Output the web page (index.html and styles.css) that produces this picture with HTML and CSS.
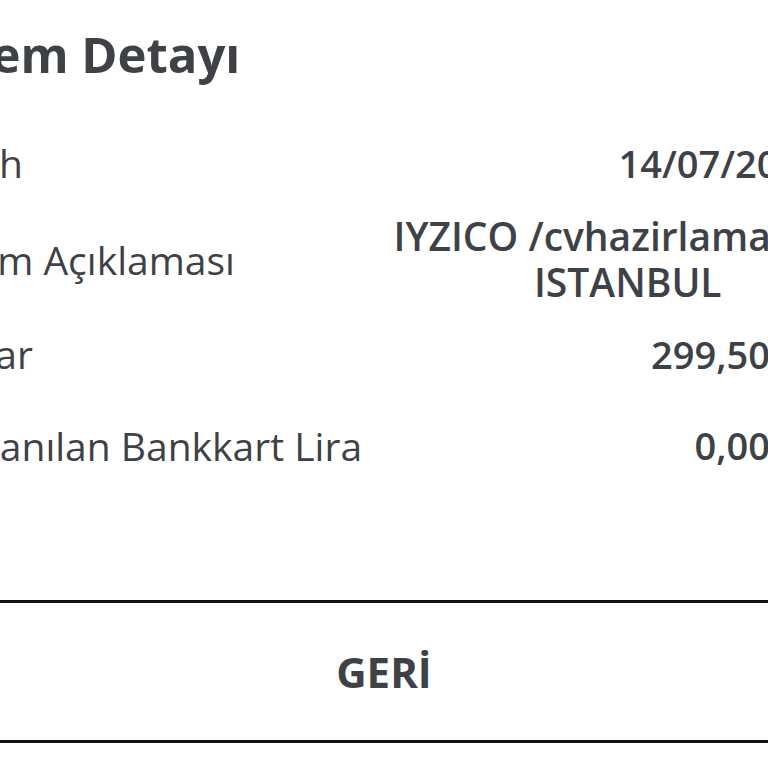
FILE: index.html
```html
<!DOCTYPE html>
<html lang="tr">
<head>
<meta charset="utf-8">
<title>İşlem Detayı</title>
<link rel="stylesheet" href="styles.css">
</head>
<body>
<div class="viewport">
  <div class="screen">
    <h1 class="title">İşlem Detayı</h1>
    <div class="rows">
      <div class="row row-1">
        <span class="label">Tarih</span>
        <span class="value">14/07/2021</span>
      </div>
      <div class="row row-2">
        <span class="label">İşlem Açıklaması</span>
        <span class="value value-multi">IYZICO /cvhazirlama.com<br>ISTANBUL</span>
      </div>
      <div class="row row-3">
        <span class="label">Tutar</span>
        <span class="value">299,50 TL</span>
      </div>
      <div class="row row-4">
        <span class="label">Kazanılan Bankkart Lira</span>
        <span class="value">0,00 TL</span>
      </div>
    </div>
    <div class="actions">
      <button class="back-btn">GERİ</button>
    </div>
  </div>
</div>
</body>
</html>
```

FILE: styles.css
```css
html, body {
  margin: 0;
  padding: 0;
  background: #ffffff;
}

.viewport {
  width: 768px;
  height: 768px;
  overflow: hidden;
  position: relative;
}

.screen {
  width: 1000px;
  margin-left: -64px;
  font-family: "Open Sans", "Noto Sans", sans-serif;
  color: #3e4246;
}

.title {
  margin: 0;
  padding: 20px 0 0 0;
  font-size: 49px;
  font-weight: 700;
  line-height: 68px;
}

.rows {
  padding: 26px 114px 0 0;
}

.row {
  display: flex;
  justify-content: space-between;
  align-items: center;
}

.row-1 { height: 97px; }
.row-2 { height: 96px; }
.row-3 { height: 93px; }
.row-4 { height: 90px; }

.label {
  font-size: 39px;
  font-weight: 400;
}

.row-1 .label {
  margin-left: -6px;
}

.value {
  font-size: 38px;
  font-weight: 600;
  text-align: right;
}

.value-multi {
  font-size: 39px;
  text-align: center;
  line-height: 46px;
  margin-right: -40px;
}

.actions {
  margin-top: 110px;
  width: 896px;
}

.back-btn {
  display: block;
  width: 100%;
  height: 143px;
  background: #ffffff;
  border: none;
  border-top: 3px solid #111111;
  border-bottom: 3px solid #111111;
  font-family: "Open Sans", "Noto Sans", sans-serif;
  font-size: 42px;
  font-weight: 700;
  color: #3e4246;
  padding: 0;
}
```
